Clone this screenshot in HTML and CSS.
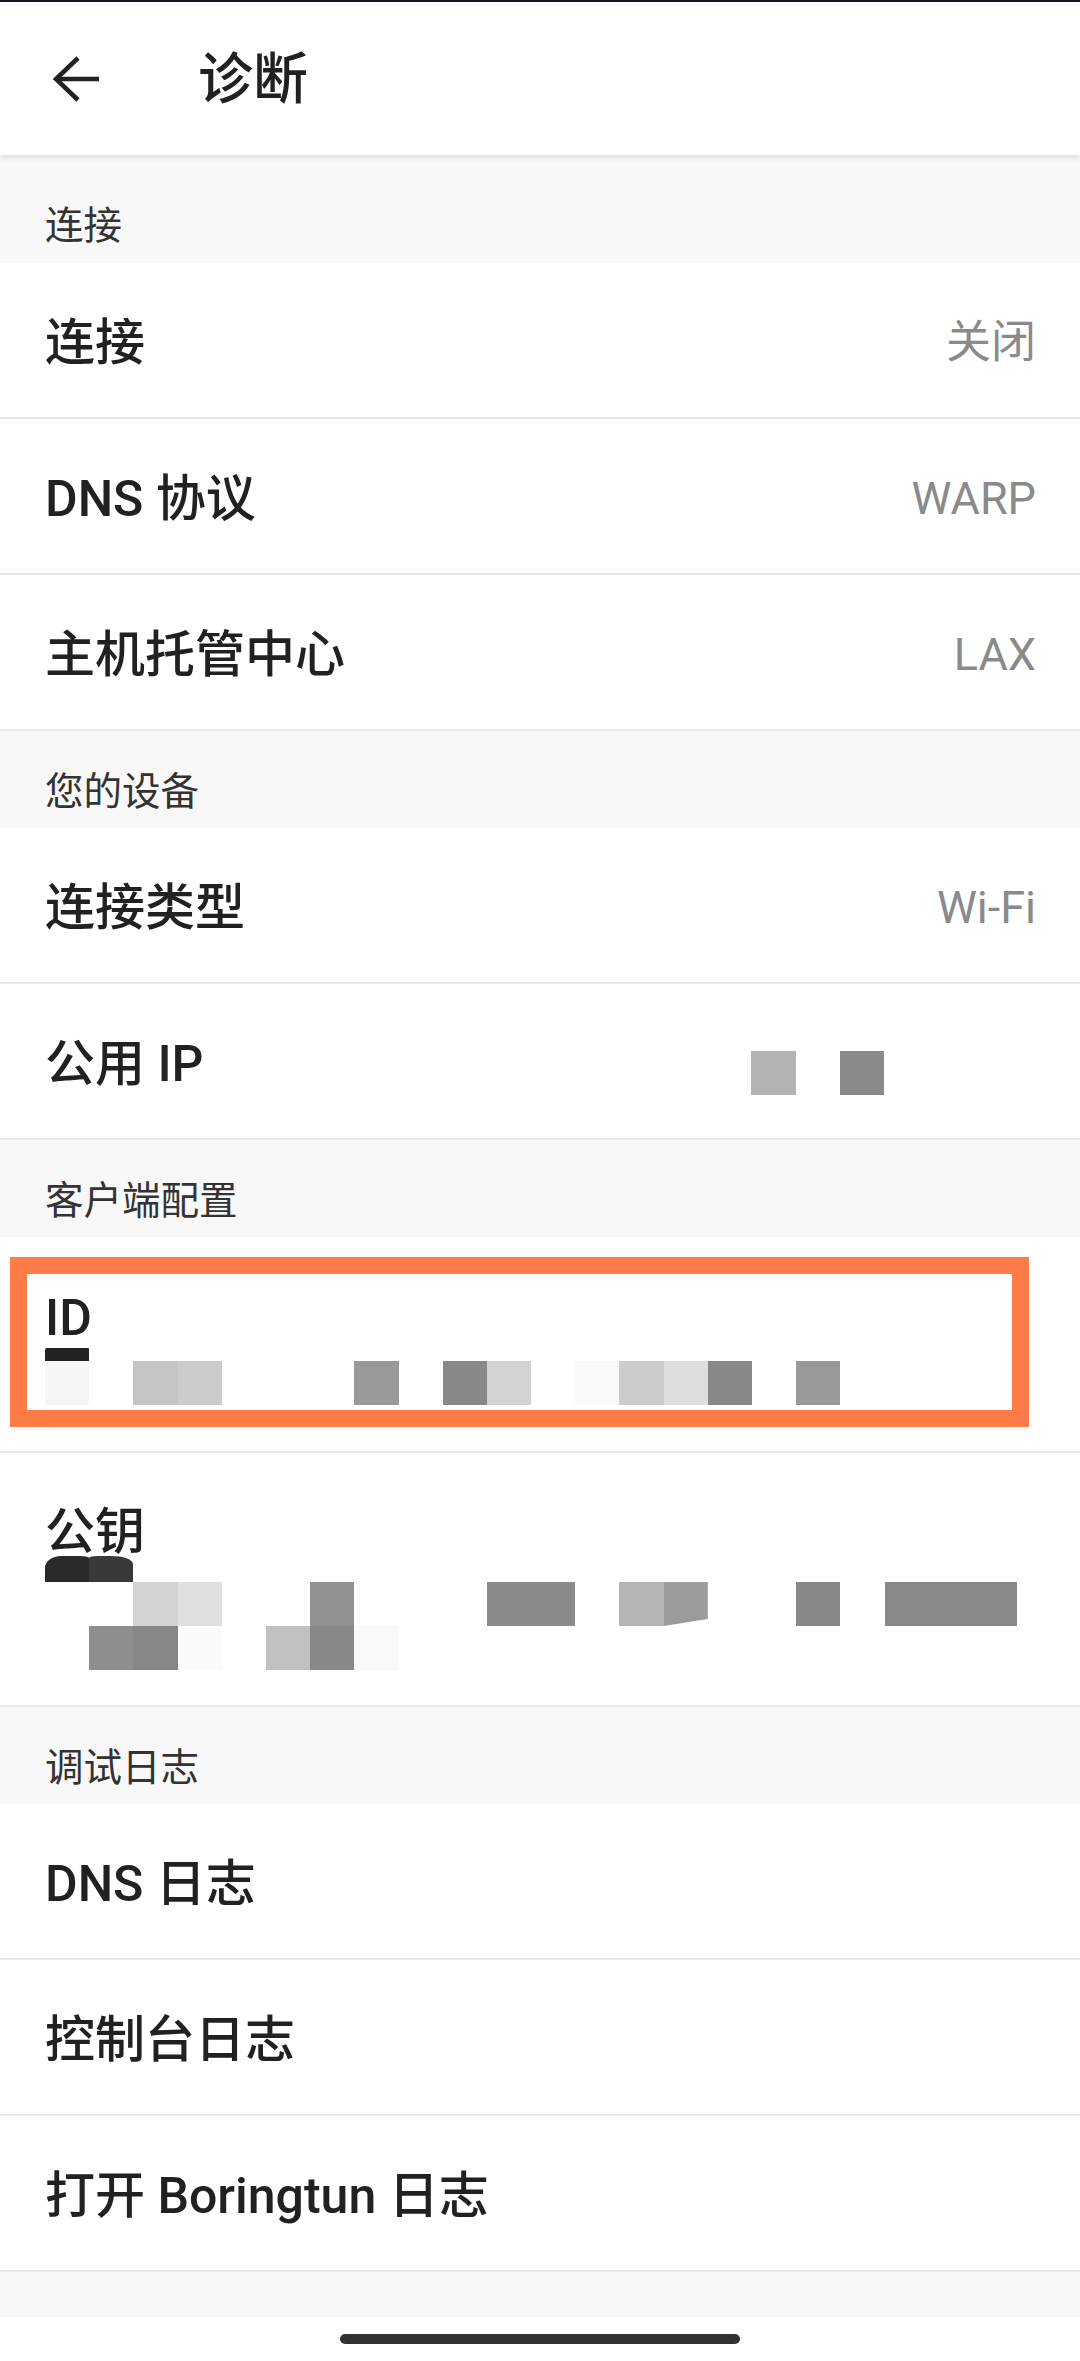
FILE: index.html
```html
<!DOCTYPE html>
<html>
<head>
<meta charset="UTF-8">
<title>诊断</title>

<link rel="stylesheet" href="styles.css">

</head>
<body>

<div class="screen">

	<!-- 标题栏 -->
	<div class="appBar">
		<svg class="backIcon" width="66" height="66" viewBox="0 0 66 66">
			<polyline points="34,12 12,33 34,54" fill="none" stroke="#222" stroke-width="4.5" stroke-linejoin="miter"/>
			<line x1="12" y1="33" x2="55" y2="33" stroke="#222" stroke-width="4.5"/>
		</svg>
		<span class="appTitle">诊断</span>
	</div>

	<!-- 连接 -->
	<div class="groupTitle firstGroup">连接</div>
	<div class="item">
		<span class="itemName">连接</span>
		<span class="itemValue">关闭</span>
	</div>
	<div class="item">
		<span class="itemName">DNS 协议</span>
		<span class="itemValue">WARP</span>
	</div>
	<div class="item">
		<span class="itemName">主机托管中心</span>
		<span class="itemValue">LAX</span>
	</div>

	<!-- 您的设备 -->
	<div class="groupTitle">您的设备</div>
	<div class="item">
		<span class="itemName">连接类型</span>
		<span class="itemValue">Wi-Fi</span>
	</div>
	<div class="item">
		<span class="itemName">公用 IP</span>
		<!-- 打码的 IP -->
		<span class="cellRow ipValue">
			<span class="cell c-b3"></span><span class="cell"></span><span class="cell c-8a"></span>
		</span>
	</div>

	<!-- 客户端配置 -->
	<div class="groupTitle">客户端配置</div>
	<div class="item stackItem idItem">
		<div class="itemName stackName">ID</div>
		<div class="cellRow thinRow">
			<span class="cell c-22"></span>
		</div>
		<div class="cellRow">
			<span class="cell c-f7"></span><span class="cell"></span><span class="cell c-c5"></span><span class="cell c-cc"></span>
			<span class="cell"></span><span class="cell"></span><span class="cell"></span><span class="cell c-99"></span>
			<span class="cell"></span><span class="cell c-88"></span><span class="cell c-d2"></span><span class="cell"></span>
			<span class="cell c-fa"></span><span class="cell c-cc"></span><span class="cell c-dd"></span><span class="cell c-88"></span>
			<span class="cell"></span><span class="cell c-99"></span>
		</div>
		<!-- 标注框 -->
		<div class="markBox"></div>
	</div>
	<div class="item stackItem keyItem">
		<div class="itemName stackName keyName">公钥</div>
		<div class="cellRow blobRow">
			<span class="cell c-2a blobLeft"></span><span class="cell c-39 blobRight"></span>
		</div>
		<div class="cellRow">
			<span class="cell"></span><span class="cell"></span><span class="cell c-d2"></span><span class="cell c-e0"></span>
			<span class="cell"></span><span class="cell"></span><span class="cell c-92"></span><span class="cell"></span>
			<span class="cell"></span><span class="cell"></span><span class="cell c-8a"></span><span class="cell c-8a"></span>
			<span class="cell"></span><span class="cell c-b5"></span><span class="cell c-9a cutCorner"></span><span class="cell"></span>
			<span class="cell"></span><span class="cell c-88"></span><span class="cell"></span><span class="cell c-89"></span>
			<span class="cell c-89"></span><span class="cell c-89"></span>
		</div>
		<div class="cellRow">
			<span class="cell"></span><span class="cell c-8e"></span><span class="cell c-87"></span><span class="cell c-fc"></span>
			<span class="cell"></span><span class="cell c-c0"></span><span class="cell c-88"></span><span class="cell c-fa"></span>
		</div>
	</div>

	<!-- 调试日志 -->
	<div class="groupTitle">调试日志</div>
	<div class="item">
		<span class="itemName">DNS 日志</span>
	</div>
	<div class="item">
		<span class="itemName">控制台日志</span>
	</div>
	<div class="item">
		<span class="itemName">打开 Boringtun 日志</span>
	</div>

	<div class="listEnd"></div>

	<!-- 底部手势条 -->
	<div class="navBar">
		<span class="homeBar"></span>
	</div>

</div>

</body>
</html>
```

FILE: styles.css
```css
/* 基本样式 */
html, body {
	margin: 0;
	padding: 0;
	background: #fff;
}

.screen {
	width: 1080px;
	height: 2361px;
	overflow: hidden;
	font-family: Roboto, "Noto Sans CJK SC", sans-serif;
	color: #212121;
}

/* 标题栏 */
.appBar {
	position: relative;
	z-index: 1;
	display: flex;
	align-items: center;
	box-sizing: border-box;
	height: 155px;
	border-top: 2px solid #11112a;
	background: #fff;
	box-shadow: 0 3px 5px rgba(0, 0, 0, 0.10);
}
.backIcon {
	margin-left: 44px;
	flex: none;
}
.appTitle {
	margin-left: 88px;
	font-size: 55px;
	font-weight: 500;
	line-height: 66px;
}

/* 分组标题 */
.groupTitle {
	box-sizing: border-box;
	height: 97px;
	padding: 36px 45px 0;
	background: #f8f8f8;
	font-size: 38.5px;
	line-height: 50px;
	color: #333;
}
.groupTitle.firstGroup {
	height: 108px;
	padding-top: 46px;
}

/* 列表项 */
.item {
	display: flex;
	align-items: center;
	justify-content: space-between;
	box-sizing: border-box;
	height: 156px;
	padding: 6px 44px 0 45px;
	border-bottom: 2px solid #eaeaea;
	background: #fff;
}
.itemName {
	font-size: 50px;
	font-weight: 500;
	line-height: 60px;
	color: #212121;
}
.itemValue {
	font-size: 45px;
	line-height: 60px;
	color: #8a8a8a;
}

.stackItem {
	position: relative;
	display: block;
	padding-top: 51px;
}
.idItem {
	height: 216px;
}
.keyItem {
	height: 254px;
}
.keyName {
	line-height: 56px;
}

/* 打码格子 */
.cellRow {
	display: flex;
}
.cell {
	flex: none;
	width: 44.2px;
	height: 44px;
}
.thinRow .cell {
	height: 13px;
	border-radius: 2px 1px 0 0;
}
.blobRow {
	margin-top: -4px;
}
.blobRow .cell {
	height: 26px;
}
.blobLeft {
	border-top-left-radius: 16px 12px;
	border-top-right-radius: 10px 2px;
}
.blobRight {
	border-top-left-radius: 8px 2px;
	border-top-right-radius: 22px 8px;
}
.cutCorner {
	clip-path: polygon(0 0, 100% 0, 100% 84%, 0 100%);
}
.ipValue {
	margin-right: 152px;
	margin-top: 18px;
}

.c-22 { background: #232323; }
.c-2a { background: #2a2a2a; }
.c-39 { background: #393939; }
.c-87 { background: #878787; }
.c-88 { background: #888; }
.c-89 { background: #898989; }
.c-8a { background: #8a8a8a; }
.c-8e { background: #8e8e8e; }
.c-92 { background: #929292; }
.c-99 { background: #999; }
.c-9a { background: #9b9b9b; }
.c-b3 { background: #b3b3b3; }
.c-b5 { background: #b5b5b5; }
.c-c0 { background: #c0c0c0; }
.c-c5 { background: #c5c5c5; }
.c-cc { background: #ccc; }
.c-d2 { background: #d2d2d2; }
.c-dd { background: #ddd; }
.c-e0 { background: #e0e0e0; }
.c-f7 { background: #f6f6f6; }
.c-fa { background: #f9f9f9; }
.c-fc { background: #fbfbfb; }

/* 标注框 */
.markBox {
	position: absolute;
	left: 10px;
	top: 20px;
	box-sizing: border-box;
	width: 1019px;
	height: 170px;
	border: 17px solid #ff7b47;
}

/* 底部 */
.listEnd {
	height: 45px;
	background: #f8f8f8;
}
.navBar {
	display: flex;
	justify-content: center;
	align-items: flex-start;
	height: 60px;
	padding-top: 17px;
	box-sizing: border-box;
	background: #fff;
}
.homeBar {
	display: block;
	width: 400px;
	height: 10px;
	border-radius: 5px;
	background: #333;
}
```
